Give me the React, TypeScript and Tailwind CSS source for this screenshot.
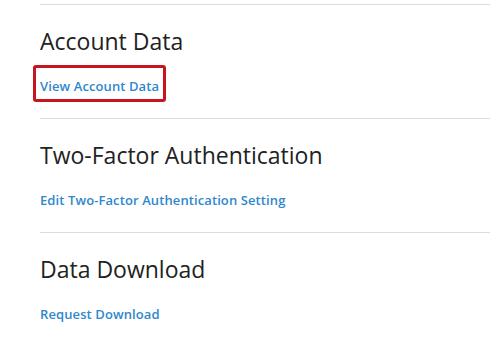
const sections = [
  { title: "Account Data", link: "View Account Data", highlight: true },
  { title: "Two-Factor Authentication", link: "Edit Two-Factor Authentication Setting" },
  { title: "Data Download", link: "Request Download" },
];

export default function App() {
  return (
    <div className="min-h-screen bg-white pl-[40px] pt-[4px] font-['Open_Sans',sans-serif]">
      {sections.map((s) => (
        <section key={s.title} className="border-t border-[#dcdcdc] pt-[20px] pb-[22px]">
          <h2 className="text-[23px] leading-[32px] text-[#222] font-normal">{s.title}</h2>
          <div className="mt-[19px] flex leading-[20px]">
            <a href="#" className="relative block text-[13px] leading-[20px] font-semibold text-[#2f87cd] tracking-[0.1px]">
              {s.link}
              {s.highlight && (
                <span className="absolute -left-[7px] -right-[7px] -top-[11px] -bottom-[6px] border-[3px] border-[#c6161d] rounded-[3px]" />
              )}
            </a>
          </div>
        </section>
      ))}
    </div>
  );
}
